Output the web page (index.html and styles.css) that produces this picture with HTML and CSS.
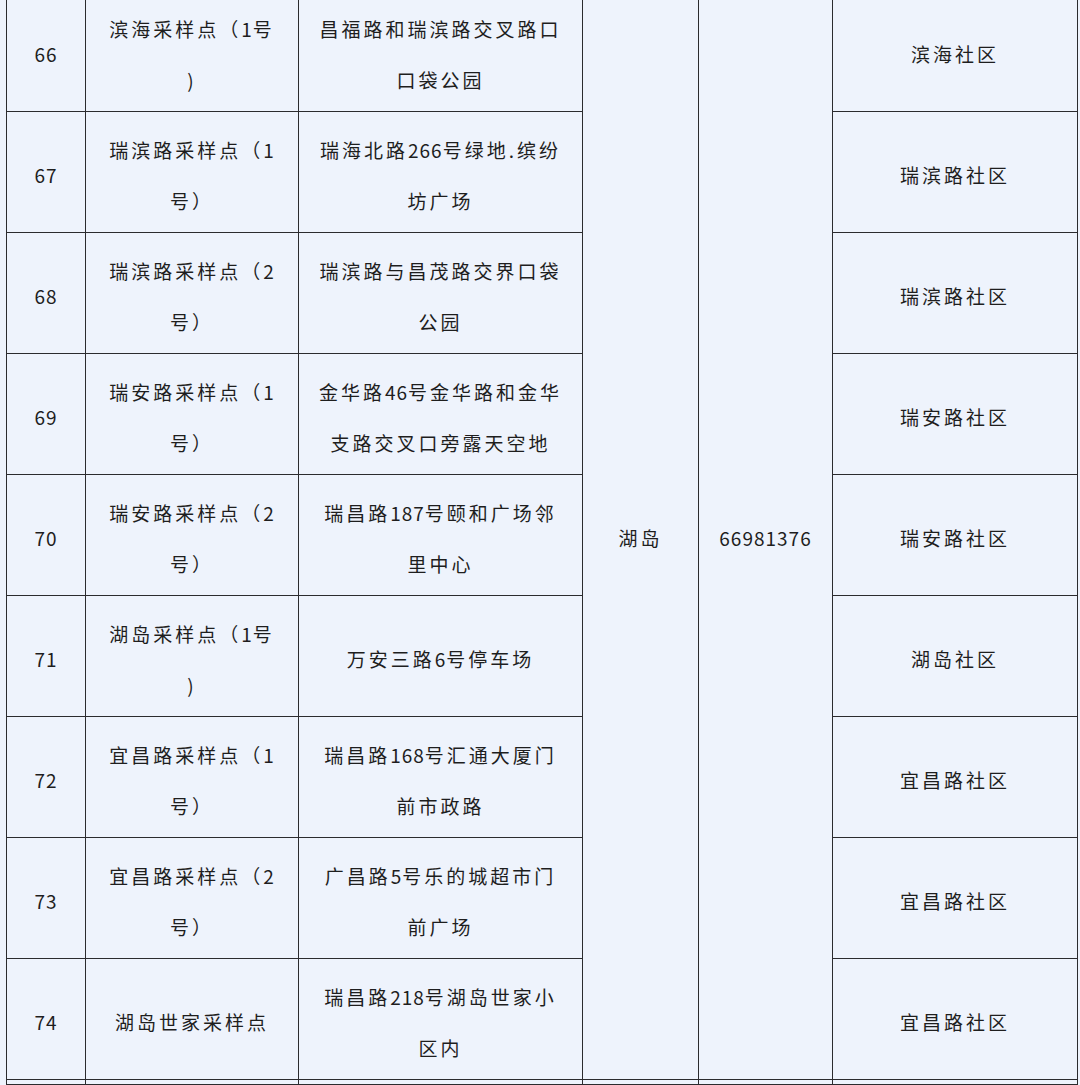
FILE: index.html
```html
<!DOCTYPE html>
<html lang="zh-CN">
<head>
<meta charset="utf-8">
<title>采样点</title>
<link rel="stylesheet" href="styles.css">
</head>
<body>
<div class="page">
<table class="grid">
<colgroup>
<col class="c1"><col class="c2"><col class="c3"><col class="c4"><col class="c5"><col class="c6">
</colgroup>
<tbody>
<tr>
<td><span class="n">66</span></td>
<td>滨海采样点（<span class="n">1</span>号<br>)</td>
<td>昌福路和瑞滨路交叉路口<br>口袋公园</td>
<td class="merge" rowspan="9">湖岛</td>
<td class="merge" rowspan="9"><span class="n">66981376</span></td>
<td>滨海社区</td>
</tr>
<tr>
<td><span class="n">67</span></td>
<td>瑞滨路采样点（<span class="n">1</span><br>号）</td>
<td>瑞海北路<span class="n">266</span>号绿地.缤纷<br>坊广场</td>
<td>瑞滨路社区</td>
</tr>
<tr>
<td><span class="n">68</span></td>
<td>瑞滨路采样点（<span class="n">2</span><br>号）</td>
<td>瑞滨路与昌茂路交界口袋<br>公园</td>
<td>瑞滨路社区</td>
</tr>
<tr>
<td><span class="n">69</span></td>
<td>瑞安路采样点（<span class="n">1</span><br>号）</td>
<td>金华路<span class="n">46</span>号金华路和金华<br>支路交叉口旁露天空地</td>
<td>瑞安路社区</td>
</tr>
<tr>
<td><span class="n">70</span></td>
<td>瑞安路采样点（<span class="n">2</span><br>号）</td>
<td>瑞昌路<span class="n">187</span>号颐和广场邻<br>里中心</td>
<td>瑞安路社区</td>
</tr>
<tr>
<td><span class="n">71</span></td>
<td>湖岛采样点（<span class="n">1</span>号<br>)</td>
<td>万安三路<span class="n">6</span>号停车场</td>
<td>湖岛社区</td>
</tr>
<tr>
<td><span class="n">72</span></td>
<td>宜昌路采样点（<span class="n">1</span><br>号）</td>
<td>瑞昌路<span class="n">168</span>号汇通大厦门<br>前市政路</td>
<td>宜昌路社区</td>
</tr>
<tr>
<td><span class="n">73</span></td>
<td>宜昌路采样点（<span class="n">2</span><br>号）</td>
<td>广昌路<span class="n">5</span>号乐的城超市门<br>前广场</td>
<td>宜昌路社区</td>
</tr>
<tr>
<td><span class="n">74</span></td>
<td>湖岛世家采样点</td>
<td>瑞昌路<span class="n">218</span>号湖岛世家小<br>区内</td>
<td>宜昌路社区</td>
</tr>
<tr class="next">
<td></td><td></td><td></td><td></td><td></td><td></td>
</tr>
</tbody>
</table>
</div>
</body>
</html>
```
FILE: styles.css
```css
html, body {
  margin: 0;
  padding: 0;
  background: #eef3fc;
}
body {
  height: 1085px;
  overflow: hidden;
}
.page {
  padding-left: 6px;
  margin-top: -10px;
}
.grid {
  table-layout: fixed;
  width: 1071px;
  border-collapse: collapse;
  font-family: "Noto Sans CJK SC", sans-serif;
  font-size: 19px;
  letter-spacing: 3px;
  color: #1e1e1e;
}
.c1 { width: 79px; }
.c2 { width: 213px; }
.c3 { width: 284px; }
.c4 { width: 116px; }
.c5 { width: 134px; }
.c6 { width: 245px; }
.grid td {
  border: 1px solid #2b2b2e;
  height: 121px;
  box-sizing: border-box;
  padding: 5px 0 0 0;
  text-align: center;
  vertical-align: middle;
  line-height: 51px;
  white-space: nowrap;
}
.grid td.merge {
  padding-top: 4px;
}
.n {
  letter-spacing: 1px;
}
.grid tr.next td {
  height: 5px;
  padding: 0;
  line-height: 0;
}
```
